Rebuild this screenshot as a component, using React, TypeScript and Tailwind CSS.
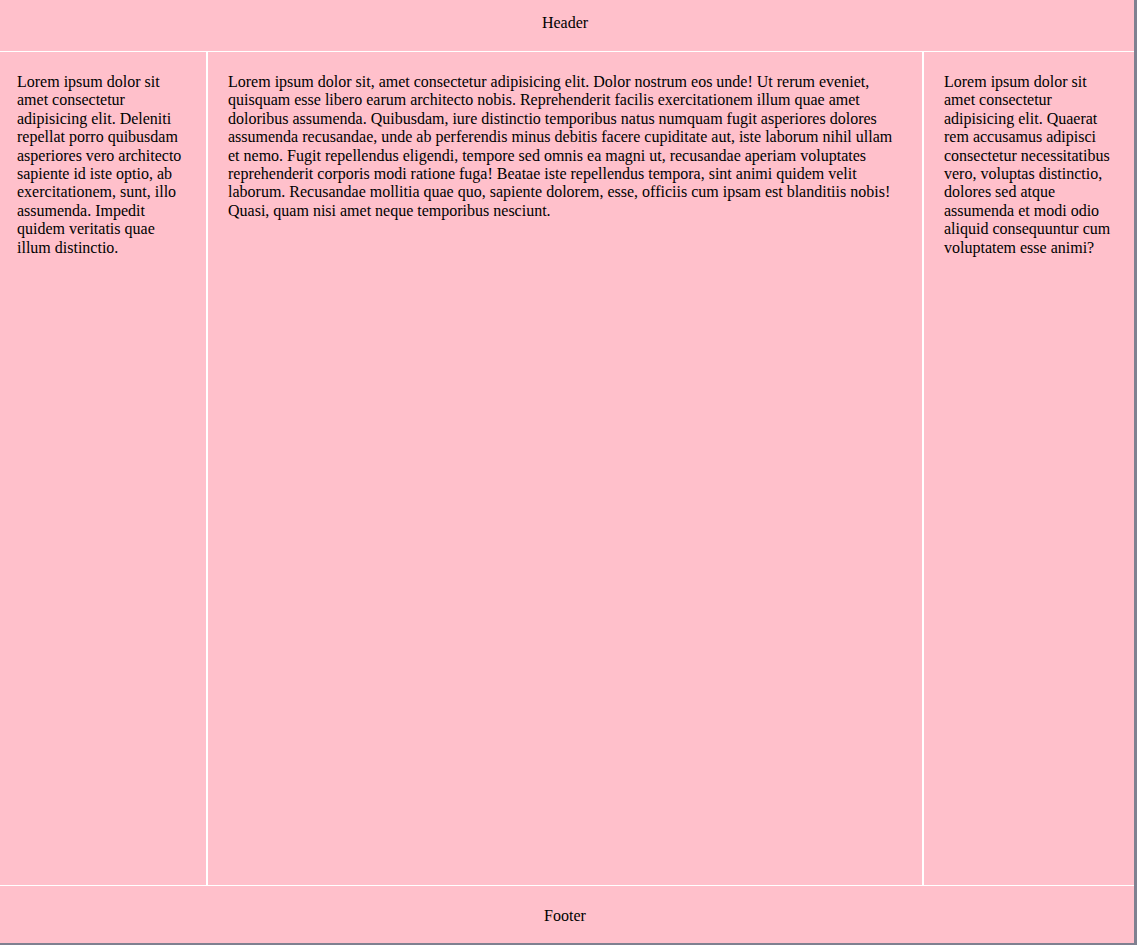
import React from 'react';

const serif = "font-['Liberation_Serif','Times_New_Roman',serif] text-[16px] leading-[1.15] text-black";

const App: React.FC = () => {
  return (
    <div className={`w-[1137px] h-[945px] bg-[#7f8090] ${serif}`}>
      <div className="w-[1134px] h-[943px] bg-white flex flex-col gap-px">
        {/* Header */}
        <header className="h-[51px] shrink-0 bg-[#ffc0cb] pt-[14px] pr-[4px] text-center">Header</header>

        {/* Columns */}
        <div className="flex-1 flex gap-[2px]">
          <aside className="w-[206px] shrink-0 bg-[#ffc0cb] pt-[21px] pl-[17px] pr-[17px]">
            Lorem ipsum dolor sit amet consectetur adipisicing elit. Deleniti repellat porro quibusdam asperiores vero architecto
            sapiente id iste optio, ab exercitationem, sunt, illo assumenda. Impedit quidem veritatis quae illum distinctio.
          </aside>
          <main className="w-[714px] shrink-0 bg-[#ffc0cb] px-5 pt-[21px]">
            Lorem ipsum dolor sit, amet consectetur adipisicing elit. Dolor nostrum eos unde! Ut rerum eveniet, quisquam esse libero
            earum architecto nobis. Reprehenderit facilis exercitationem illum quae amet doloribus assumenda. Quibusdam, iure
            distinctio temporibus natus numquam fugit asperiores dolores assumenda recusandae, unde ab perferendis minus debitis
            facere cupiditate aut, iste laborum nihil ullam et nemo. Fugit repellendus eligendi, tempore sed omnis ea magni ut,
            recusandae aperiam voluptates reprehenderit corporis modi ratione fuga! Beatae iste repellendus tempora, sint animi
            quidem velit laborum. Recusandae mollitia quae quo, sapiente dolorem, esse, officiis cum ipsam est blanditiis nobis!
            Quasi, quam nisi amet neque temporibus nesciunt.
          </main>
          <aside className="flex-1 bg-[#ffc0cb] px-5 pt-[21px]">
            Lorem ipsum dolor sit amet consectetur adipisicing elit. Quaerat rem accusamus adipisci consectetur necessitatibus vero,
            voluptas distinctio, dolores sed atque assumenda et modi odio aliquid consequuntur cum voluptatem esse animi?
          </aside>
        </div>

        {/* Footer */}
        <footer className="h-[57px] shrink-0 bg-[#ffc0cb] pt-[4px] pr-[4px] flex items-center justify-center">Footer</footer>
      </div>
    </div>
  );
};

export default App;
